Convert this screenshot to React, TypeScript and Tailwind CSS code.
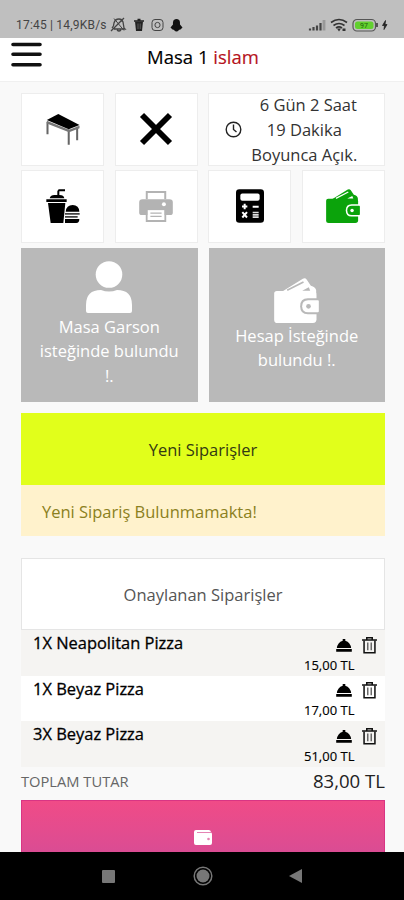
import React from "react";

const orders = [
  { qty: 1, name: "Neapolitan Pizza", price: "15,00 TL" },
  { qty: 1, name: "Beyaz Pizza", price: "17,00 TL" },
  { qty: 3, name: "Beyaz Pizza", price: "51,00 TL" },
];

function TableIcon() {
  return (
    <svg viewBox="0 0 100 92" className="h-[31px] w-[34px]">
      <path d="M4 24v36M67 46v45M92 38v40" stroke="#666" strokeWidth="6" fill="none" />
      <path d="M2 20l66 27 31-12v7l-31 12L2 28z" fill="#777" />
      <path d="M36 0l63 33-32 12L2 18z" fill="#000" />
    </svg>
  );
}

function CloseIcon() {
  return (
    <svg viewBox="0 0 34 34" className="size-[34px]">
      <path d="M3 3l28 28M31 3L3 31" stroke="#000" strokeWidth="5.800" />
    </svg>
  );
}

function FastFoodIcon() {
  return (
    <svg viewBox="0 0 100 102" className="size-[34px]">
      <path d="M33 20V6l4-5h19v6H39v13z" />
      <path d="M10 28q3-10 14-10h16q12 0 14 10zM0 31h61v8H0zM5 42h52l-6 60H13z" />
      <path d="M58 68q2-20 21-20t20 20z" />
      <path d="M56 72h44v5H56zM56 81h38v5H56z" fill="#444" />
      <path d="M56 90h43q0 12-9 12H56z" />
    </svg>
  );
}

function PrinterIcon() {
  return (
    <svg viewBox="0 0 102 94" className="h-[31px] w-[34px]">
      <path d="M23 25V3h56v22M23 60v31h56V60" fill="#fff" stroke="#b3b3b3" strokeWidth="6" />
      <path d="M10 25h82q10 0 10 10v30q0 8-8 8H8q-8 0-8-8V35q0-10 10-10z" fill="#b3b3b3" />
      <path d="M26 58h50v30H26z" fill="#fff" />
      <path d="M34 67h34M34 77h34" stroke="#b3b3b3" strokeWidth="4" />
      <circle cx="75" cy="40" r="6" fill="#fff" />
    </svg>
  );
}

function CalculatorIcon() {
  return (
    <svg viewBox="0 0 84 101" className="h-[34px] w-7">
      <rect width="84" height="101" rx="10" />
      <rect x="13" y="13" width="58" height="22" rx="6" fill="#fff" />
      <path d="M18 52h16M26 44v16M50 53h18M19 69l14 16M33 69L19 85" stroke="#fff" strokeWidth="6" fill="none" />
      <path d="M50 70h18M50 77h18M50 84h18" stroke="#ddd" strokeWidth="5" />
    </svg>
  );
}

function CardWallet({ className, fill, line }: { className: string; fill: string; line: string }) {
  return (
    <svg viewBox="0 0 134 135" className={className}>
      <path d="M22 42L86 2q7-4 12 3l12 18q14 3 16 14v10H22z" fill={fill} />
      <path d="M8 39h108q11 0 11 11v74q0 11-11 11H10q-10 0-10-10V47q0-8 8-8z" fill={fill} />
      <path d="M39 37l49-25" stroke={line} strokeWidth="5" fill="none" />
      <path d="M84 38l20-10 4 10z" fill={line} />
      <path d="M134 61h-33q-23 0-23 24t23 24h33z" fill={line} />
      <path d="M131 67h-29q-18 0-18 18t18 18h29q3 0 3-3V70q0-3-3-3z" fill={fill} />
      <circle cx="103" cy="85" r="7" fill={line} />
    </svg>
  );
}

function BellServiceIcon() {
  return (
    <svg viewBox="0 0 48 40" className="h-[13px] w-4">
      <path d="M20 0h8v5q16 5 18 23H2Q4 10 20 5zM0 31h48v8H0z" />
    </svg>
  );
}

function TrashIcon() {
  return (
    <svg viewBox="0 0 44 50" className="h-[17px] w-[15px]" fill="none" stroke="#111">
      <path d="M6 10v36h32V10" strokeWidth="4.500" />
      <path d="M0 9h44M14 8V2.500h16V8" strokeWidth="4.500" />
      <path d="M17 16v23M27 16v23" stroke="#444" strokeWidth="3.500" />
    </svg>
  );
}

function StatusBar() {
  return (
    <div className="flex h-[38px] shrink-0 items-end bg-[#bfbfbf] pr-[15px] pb-[5px] pl-4 font-['Roboto',sans-serif] text-[#444]">
      <span className="mr-[3px] w-[91px] text-[12px] leading-[16px] tracking-[0.2px] whitespace-nowrap">17:45 | 14,9KB/s</span>
      <svg viewBox="0 0 73 16" className="h-4 w-[73px]" fill="none" stroke="#444" strokeWidth="1.300">
        {/* muted bell */}
        <path d="M2 11q2-2 2-5 1-4 5-4 3 0 4 3l1 6 1 1H4M7 13q2 2 4 0M1 14L14 1" />
        <path d="M4 1.500l10 12" strokeWidth="1" />
        <path d="M25 4.500h8l-1 9.500h-6z" fill="#222" stroke="none" />
        <path d="M24 4h10M27.500 2.500h3" stroke="#222" />
        <path d="M28 6.500v5.500M30.200 6.500v5.500" stroke="#777" strokeWidth=".7" />
        <rect x="42" y="2.500" width="11" height="11" rx="3" strokeWidth="1" />
        <circle cx="47.500" cy="8" r="2.600" strokeWidth="1" />
        <path d="M66.500 2c4 0 3.500 4 3.500 5.500l2.500 3-2 2c-2 0-2 2-4 2s-2-2-4-2l-2-2 2.500-3c0-1.500-.5-5.500 3.500-5.500z" fill="#111" stroke="none" />
      </svg>
      <svg viewBox="0 0 82 16" className="ml-auto h-4 w-[82px]" fill="none">
        <path d="M3 13.500v-2M6.500 13.500v-3.500M10 13.500V8.500M13.500 13.500V6" stroke="#444" strokeWidth="2.200" />
        <path d="M17 13.500V3" stroke="#999" strokeWidth="2.800" />
        <path d="M24 5.500q8-6 16 0M26.500 8.500q5.500-4 11 0M29 11q3-2.200 6 0" stroke="#333" strokeWidth="1.600" />
        <path d="M30 11.500h4l-2 3zM35.500 11.500h3v2.500h-3z" fill="#333" />
        <rect x="46" y="2.500" width="22.500" height="11.500" rx="4" stroke="#555" strokeWidth="1.200" />
        <rect x="48" y="4.500" width="18.500" height="7.500" rx="2.500" fill="#62d02f" />
        <path d="M70 6v4" stroke="#333" strokeWidth="1.500" />
        <text x="57" y="11" fontSize="7" textAnchor="middle" fill="#24600f">97</text>
        <path d="M78.500 3.500l-3 5h2l-.5 4 3-5h-2z" fill="#222" stroke="#222" strokeWidth=".8" />
      </svg>
    </div>
  );
}

function Tile({ children }: { children: React.ReactNode }) {
  return <div className="flex h-[73px] items-center justify-center border border-[#ededed] bg-white">{children}</div>;
}

export default function App() {
  return (
    <div className="flex h-[900px] w-[404px] flex-col overflow-hidden bg-[#f9f9f9] font-['Open_Sans','Noto_Sans',sans-serif] text-black">
      <StatusBar />

      <header className="grid h-[43.500px] shrink-0 grid-cols-[1fr_auto_1fr] border-b border-[#f0f0f0] bg-white">
        <svg viewBox="0 0 31 26" className="mt-[4px] ml-[11px] h-[26px] w-[31px]">
          <path d="M2 2.500h27M2 12.200h27M2 22.800h27" stroke="#111" strokeWidth="3.600" strokeLinecap="round" />
        </svg>
        <h1 className="mt-[7px] pl-[2px] text-[18.500px] leading-6 font-normal [-webkit-text-stroke:0.15px]">
          Masa 1 <span className="text-[#b5121b]">islam</span>
        </h1>
      </header>

      <main className="flex min-h-0 flex-1 flex-col overflow-hidden pt-[11px] pr-[19px] pl-[21px]">
        <div className="grid shrink-0 grid-cols-[83px_83px_83px_83px] justify-between gap-y-1">
          <Tile><TableIcon /></Tile>
          <Tile><CloseIcon /></Tile>
          <div className="col-span-2 flex h-[73px] items-center border border-[#ededed] bg-white pl-4 text-[#333]">
            <svg viewBox="0 0 17 17" className="size-[17px] shrink-0" fill="none" stroke="#222" strokeWidth="1.400">
              <circle cx="8.500" cy="8.500" r="7.300" />
              <path d="M8.500 3.500v5l3 2.500" />
            </svg>
            <p className="mt-[3px] ml-[7px] w-[110px] text-center text-[16.500px] leading-[24.700px] whitespace-nowrap">
              <span className="pl-2">6 Gün 2 Saat</span>
              <br />
              19 Dakika
              <br />
              Boyunca Açık.
            </p>
          </div>
          <Tile><FastFoodIcon /></Tile>
          <Tile><PrinterIcon /></Tile>
          <Tile><CalculatorIcon /></Tile>
          <Tile><CardWallet className="size-[34px]" fill="#0ba30b" line="#fff" /></Tile>
        </div>

        <div className="mt-[5px] grid h-[154.500px] shrink-0 grid-cols-2 gap-[11px] text-center text-[16.500px] leading-[24.500px] text-white">
          <div className="flex flex-col items-center bg-[#b9b9b9] pt-[13px]">
            <svg viewBox="0 0 46 53" className="h-[53px] w-[46px] shrink-0" fill="#fff">
              <circle cx="23" cy="13.500" r="13.300" />
              <path d="M0 50V44Q0 29 15 29q8 3 16 0 15 0 15 15v6q0 2-2 2H2q-2 0-2-2z" />
            </svg>
            <p className="mt-px">
              Masa Garson
              <br />
              isteğinde bulundu
              <br />
              !.
            </p>
          </div>
          <div className="flex flex-col items-center bg-[#b9b9b9] pt-[30px]">
            <CardWallet className="size-[45px] shrink-0" fill="#fff" line="#b9b9b9" />
            <p className="mt-px">
              Hesap İsteğinde
              <br />
              bulundu !.
            </p>
          </div>
        </div>

        <section className="mt-[11px] shrink-0">
          <h2 className="flex h-[72px] items-center justify-center bg-[#e1ff1b] pt-[3px] text-[16.500px] text-[#333a12]">Yeni Siparişler</h2>
          <p className="flex h-[51px] items-center bg-[#fff2cc] pt-[3px] pl-[21px] text-[16.500px] text-[#8b8020]">Yeni Sipariş Bulunmamakta!</p>
        </section>

        <section className="mt-[22px] shrink-0">
          <h2 className="flex h-[72px] items-center justify-center border border-[#e5e5e5] bg-white pt-[3px] text-[16.500px] text-[#555]">
            Onaylanan Siparişler
          </h2>
          <ul>
            {orders.map((order, i) => (
              <li key={i} className="flex h-[45.700px] justify-between pl-3 odd:bg-[#f5f4f2] even:bg-white">
                <span className="text-[16.450px] leading-[25px] [-webkit-text-stroke:0.3px]">
                  {order.qty}X {order.name}
                </span>
                <div className="w-[81px] pt-[6.500px]">
                  <div className="flex h-[17px] items-center pr-[8px] pl-[32px]">
                    <BellServiceIcon />
                    <span className="ml-auto"><TrashIcon /></span>
                  </div>
                  <div className="text-[13px] leading-[22px] whitespace-nowrap [-webkit-text-stroke:0.15px]">{order.price}</div>
                </div>
              </li>
            ))}
          </ul>
          <div className="flex h-[33px] items-center justify-between pb-[5px]">
            <span className="text-[14.700px] text-[#666]">TOPLAM TUTAR</span>
            <span className="text-[18.600px] text-[#222]">83,00 TL</span>
          </div>
        </section>

        <button className="flex h-[75px] shrink-0 justify-center border border-[#d93584] bg-linear-to-b from-[#f04b87] to-[#d14c98] pt-[29px]">
          <svg viewBox="0 0 18 16" className="h-4 w-[18px]">
            <path d="M2 0h13q2 0 2 2.500 1 0 1 2V13q0 2-2 2H2q-2 0-2-2V2q0-2 2-2z" fill="#fff" />
            <path d="M3 2.500h14" stroke="#e583b4" />
            <circle cx="14.500" cy="9" r="1.300" fill="#e583b4" />
          </svg>
        </button>
      </main>

      <nav className="flex h-12 shrink-0 items-center justify-between bg-black pr-[102px] pl-[102px]">
        <span className="size-[13px] rounded-[1px] bg-[#777]" />
        <svg viewBox="0 0 20 20" className="ml-[2px] size-5" fill="#777">
          <circle cx="10" cy="10" r="8.800" fill="none" stroke="#777" strokeWidth="1.500" />
          <circle cx="10" cy="10" r="6.500" />
        </svg>
        <svg viewBox="0 0 13 14" className="h-[14px] w-[13px]" fill="#777">
          <path d="M13 0v14L0 7z" />
        </svg>
      </nav>
    </div>
  );
}
